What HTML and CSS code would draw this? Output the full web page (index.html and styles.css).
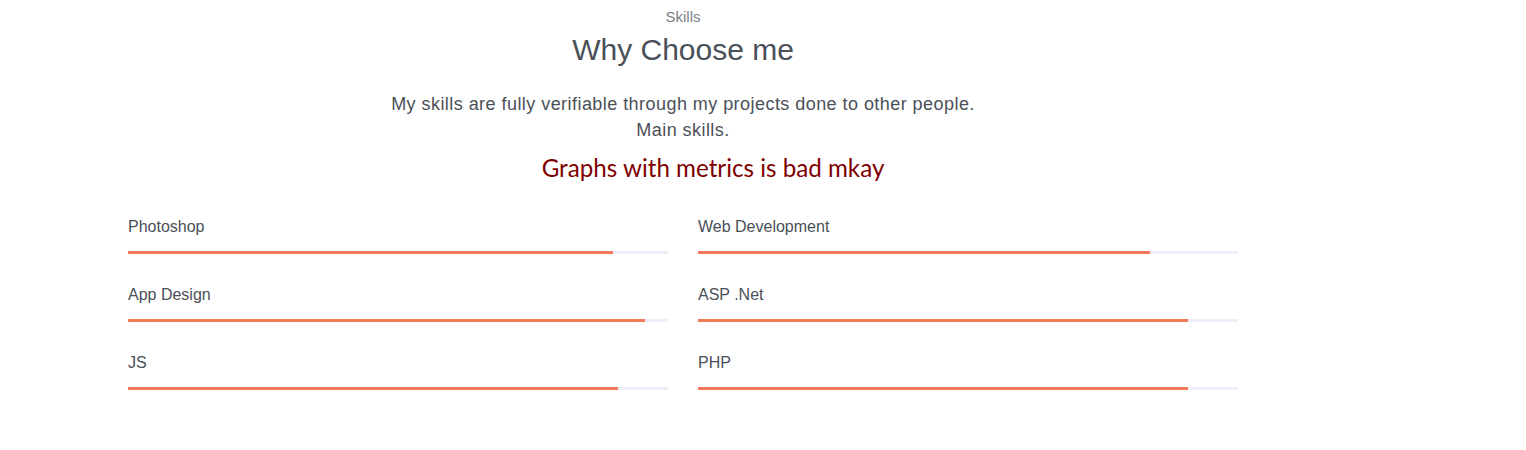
FILE: index.html
```html
<!doctype html>
<html lang="en">
<head>
    <meta charset="UTF-8">
    <title>Skills</title>
    <link rel="stylesheet" href="styles.css">
</head>
<body>
<div class="page">
    <section class="skills">
        <div class="heading">
            <span class="sub">Skills</span>
            <h2>Why Choose me</h2>
            <p>My skills are fully verifiable through my projects done to other people.<br>Main skills.</p>
            <h3>Graphs with metrics is bad mkay</h3>
        </div>
        <div class="grid">
            <div class="skill">
                <span>Photoshop</span>
                <div class="bar"><div class="fill" style="width: 89.8%"></div></div>
            </div>
            <div class="skill">
                <span>Web Development</span>
                <div class="bar"><div class="fill" style="width: 83.7%"></div></div>
            </div>
            <div class="skill">
                <span>App Design</span>
                <div class="bar"><div class="fill" style="width: 95.7%"></div></div>
            </div>
            <div class="skill">
                <span>ASP .Net</span>
                <div class="bar"><div class="fill" style="width: 90.7%"></div></div>
            </div>
            <div class="skill">
                <span>JS</span>
                <div class="bar"><div class="fill" style="width: 90.7%"></div></div>
            </div>
            <div class="skill">
                <span>PHP</span>
                <div class="bar"><div class="fill" style="width: 90.7%"></div></div>
            </div>
        </div>
    </section>
</div>
</body>
</html>
```

FILE: styles.css
```css
body {
    margin: 0;
    background: #fff;
    font-family: "Liberation Sans", Arial, sans-serif;
    color: #4a5058;
}

.page {
    width: 1366px;
}

.skills {
    width: 1110px;
    margin: 0 auto;
    padding: 0 15px;
}

.heading {
    text-align: center;
}

.sub {
    display: block;
    padding-top: 7px;
    font-size: 15px;
    line-height: 20px;
    color: #7a7f85;
}

h2 {
    margin: 3px 0 0;
    font-size: 30px;
    font-weight: 400;
    line-height: 40px;
    color: #4a5058;
}

.heading p {
    margin: 21px 0 0;
    font-size: 18px;
    line-height: 26px;
    letter-spacing: 0.45px;
}

h3 {
    margin: 9px 0 0;
    padding-left: 60px;
    font-family: Lato, "Open Sans", sans-serif;
    font-size: 24.2px;
    font-weight: 400;
    line-height: 32px;
    color: #800000;
}

.grid {
    display: grid;
    grid-template-columns: 540px 540px;
    column-gap: 30px;
    margin-top: 33px;
}

.skill {
    height: 68px;
}

.skill span {
    display: block;
    font-size: 16px;
    line-height: 20px;
}

.bar {
    margin-top: 14px;
    height: 3px;
    background: #eceef8;
}

.fill {
    height: 100%;
    background: #f47a5a;
}
```
